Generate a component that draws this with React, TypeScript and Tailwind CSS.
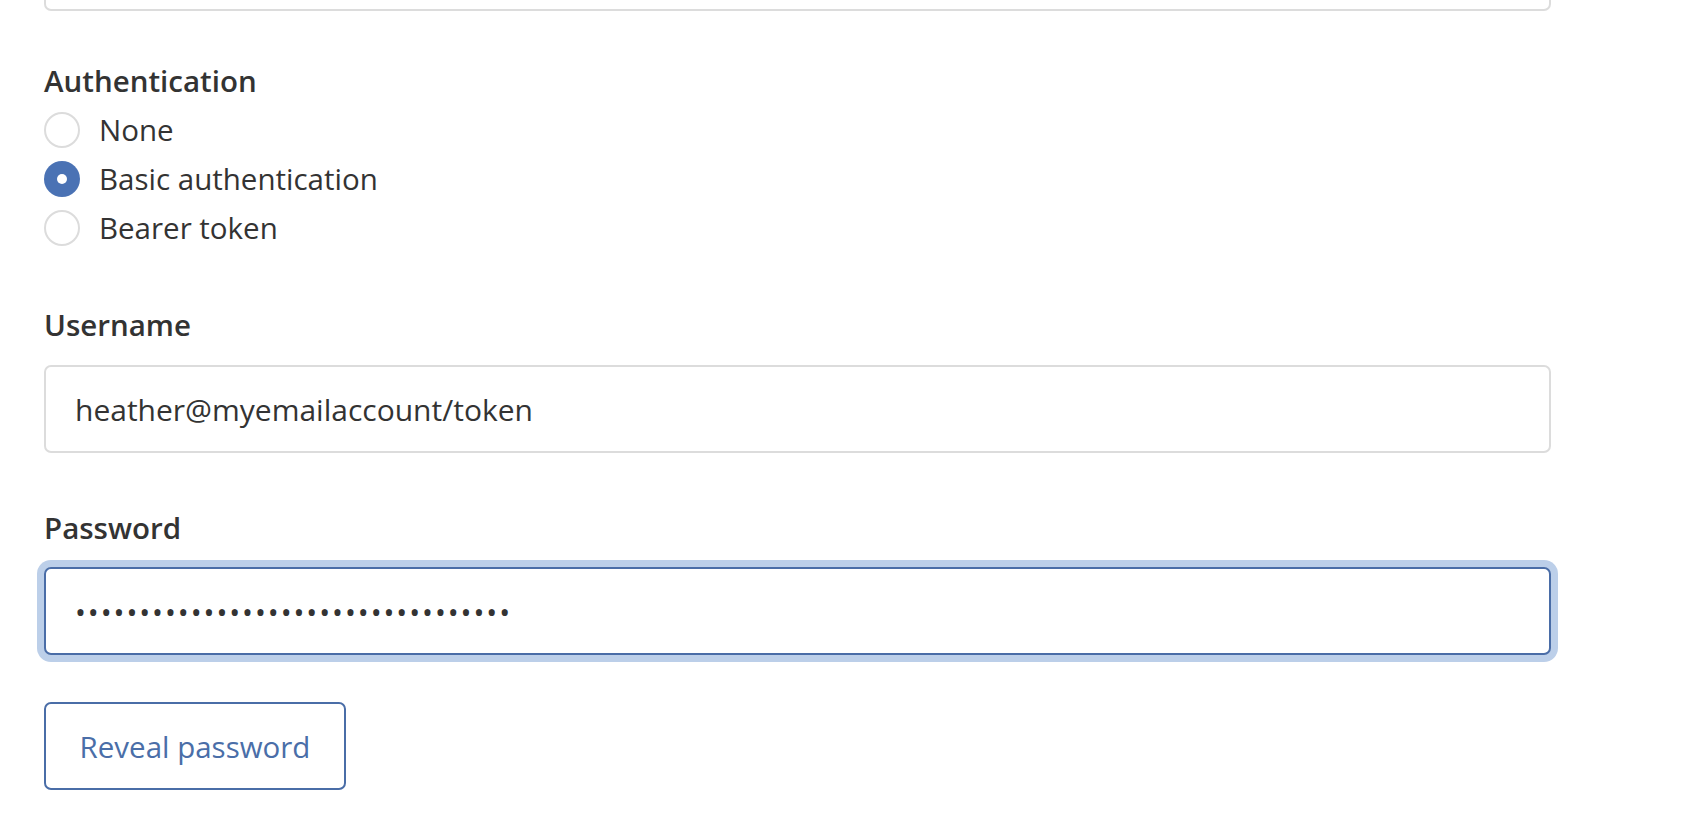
import { useState } from 'react'

const AUTH_OPTIONS = [
  { id: 'none', label: 'None' },
  { id: 'basic', label: 'Basic authentication' },
  { id: 'bearer', label: 'Bearer token' },
]

export default function App() {
  const [auth, setAuth] = useState('basic')
  const [username, setUsername] = useState('heather@myemailaccount/token')
  const [password, setPassword] = useState('abcdefghijklmnopqrstuvwxyz01234567')
  const [reveal, setReveal] = useState(false)

  return (
    <div className="min-h-screen bg-white text-[#333] font-['Open_Sans',_'Noto_Sans',_sans-serif] text-[29.5px] leading-[49px]">
      <div className="pl-[44px] w-[1551px]">
        {/* field above, scrolled mostly out of view */}
        <input
          type="text"
          readOnly
          className="mt-[-77px] block w-full h-[88px] rounded-[7px] border-2 border-[#dcdcdc] bg-white px-[29px] outline-none"
        />

        {/* Authentication */}
        <fieldset className="mt-[45px]">
          <legend className="font-semibold">Authentication</legend>
          {AUTH_OPTIONS.map((opt) => {
            const checked = auth === opt.id
            return (
              <label key={opt.id} className="flex items-center cursor-pointer">
                <input
                  type="radio"
                  name="auth"
                  value={opt.id}
                  checked={checked}
                  onChange={() => setAuth(opt.id)}
                  className="sr-only"
                />
                <span
                  className={`w-[36px] h-[36px] rounded-full flex items-center justify-center shrink-0 ${
                    checked ? 'bg-[#4a72b4]' : 'border-2 border-[#dcdcdc] bg-white'
                  }`}
                >
                  {checked && <span className="w-[10px] h-[10px] rounded-full bg-white" />}
                </span>
                <span className="ml-[19px]">{opt.label}</span>
              </label>
            )
          })}
        </fieldset>

        {/* Username */}
        <div className="mt-[48px]">
          <label htmlFor="username" className="block font-semibold">Username</label>
          <input
            id="username"
            type="text"
            value={username}
            onChange={(e) => setUsername(e.target.value)}
            className="mt-[16px] block w-full h-[88px] rounded-[7px] border-2 border-[#dcdcdc] bg-white px-[29px] text-[30px] text-[#333] outline-none"
          />
        </div>

        {/* Password */}
        <div className="mt-[50px]">
          <label htmlFor="password" className="block font-semibold">Password</label>
          <input
            id="password"
            type={reveal ? 'text' : 'password'}
            value={password}
            onChange={(e) => setPassword(e.target.value)}
            className="mt-[15px] block w-full h-[88px] rounded-[7px] border-2 border-[#4a6da7] bg-white px-[29px] text-[29px] text-[#333] tracking-[1.95px] outline-none shadow-[0_0_0_7px_#bccfe9]"
          />
        </div>

        <button
          onClick={() => setReveal((r) => !r)}
          className="mt-[47px] block w-[302px] h-[88px] rounded-[7px] border-2 border-[#4a6da7] bg-white text-[#4a6ea8] cursor-pointer"
        >
          {reveal ? 'Hide password' : 'Reveal password'}
        </button>
      </div>
    </div>
  )
}
